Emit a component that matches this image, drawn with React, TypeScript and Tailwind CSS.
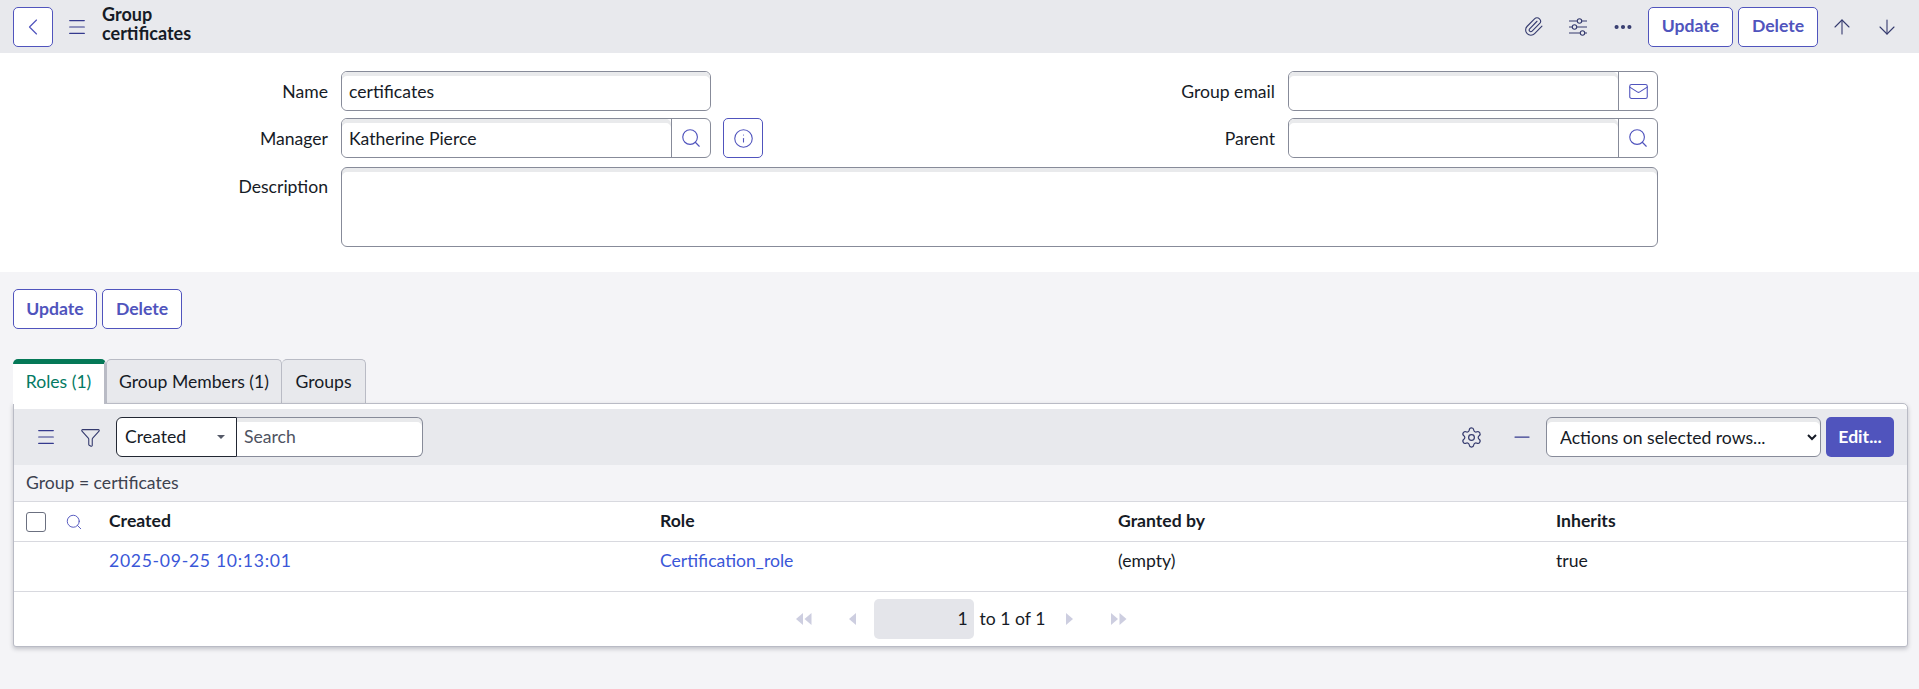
import { ArrowDown, ArrowUp, ChevronLeft, Ellipsis, Filter, Info, Mail, Menu, Minus, Paperclip, Search, Settings } from "lucide-react";
import type { ReactNode } from "react";

const inputClass =
  "h-full min-w-0 flex-1 rounded-[5px] bg-white px-[7px] text-[17.6px] text-[#161b26] shadow-[inset_0_4px_0_#e9eaec] outline-none";

function OutlineButton({ label, className }: { label: string; className: string }) {
  return (
    <button className={`h-10 rounded-[5px] border border-[#5054bd] bg-white text-[17.6px] font-bold text-[#5054bd] ${className}`}>
      {label}
    </button>
  );
}

function IconBox({ children }: { children: ReactNode }) {
  return (
    <span className="flex h-10 w-10 shrink-0 items-center justify-center rounded-[5px] border border-[#5054bd] bg-white text-[#5054bd]">
      {children}
    </span>
  );
}

function FieldLabel({ text, className }: { text: string; className: string }) {
  return <label className={`pr-[13px] text-right text-[17.6px] text-[#161b26] ${className}`}>{text}</label>;
}

function Field({ value, icon }: { value?: string; icon?: ReactNode }) {
  return (
    <div className="flex h-10 w-[370px] overflow-hidden rounded-[6px] border border-[#878b99] bg-white">
      <input readOnly value={value ?? ""} className={inputClass} />
      {icon && (
        <span className="flex w-[39px] shrink-0 items-center justify-center border-l border-[#878b99] text-[#5054bd]">
          {icon}
        </span>
      )}
    </div>
  );
}

function SlidersIcon() {
  return (
    <svg width="20" height="18" viewBox="0 0 20 18" fill="none" stroke="currentColor" strokeWidth="1.1">
      <path d="M1 3h8M14 3h5M1 9h3M9 9h10M1 15h11M17 15h2" />
      <circle cx="11.5" cy="3" r="2.2" />
      <circle cx="6.5" cy="9" r="2.2" />
      <circle cx="14.5" cy="15" r="2.2" />
    </svg>
  );
}

function PagerArrows({ dir, double }: { dir: "left" | "right"; double?: boolean }) {
  const tri = dir === "left" ? "M7 0v12L0 6z" : "M0 0v12l7-6z";
  return (
    <svg width={double ? 16 : 8} height="12" viewBox={double ? "0 0 16 12" : "0 0 8 12"} fill="#cdcee0">
      <path d={tri} />
      {double && <path d={tri} transform="translate(8.5 0)" />}
    </svg>
  );
}

export default function App() {
  return (
    <div className="flex h-[689px] flex-col overflow-hidden bg-[#f4f4f7] font-['Lato',sans-serif] text-[17.6px] text-[#161b26] [font-variant-numeric:tabular-nums]">
      <header className="flex h-[53px] shrink-0 items-center bg-[#e8e9ed] pl-[13px] pr-[20px]">
        <IconBox>
          <ChevronLeft size={28} strokeWidth={1} />
        </IconBox>
        <Menu size={22} strokeWidth={1.25} className="ml-[13px] text-[#343a8e]" />
        <h1 className="ml-[14px] pb-[5px] text-[18px] font-bold leading-[19px]">
          Group
          <br />
          certificates
        </h1>
        <div className="ml-auto flex items-center text-[#343a6e]">
          <Paperclip size={21} strokeWidth={1.25} />
          <span className="ml-[24px]">
            <SlidersIcon />
          </span>
          <Ellipsis size={22} strokeWidth={2.5} className="ml-[24px] mr-[14px]" />
          <div className="flex gap-[5px]">
            <OutlineButton label="Update" className="w-[85px]" />
            <OutlineButton label="Delete" className="w-[80px]" />
          </div>
          <ArrowUp size={24} strokeWidth={1.1} className="ml-[12px]" />
          <ArrowDown size={24} strokeWidth={1.1} className="ml-[21px]" />
        </div>
      </header>

      <section className="flex h-[219px] shrink-0 flex-col gap-[7px] bg-white pt-[18px]">
        <div className="flex h-10 items-center">
          <FieldLabel text="Name" className="w-[341px] pt-[2px]" />
          <Field value="certificates" />
          <FieldLabel text="Group email" className="w-[577px] pt-[2px]" />
          <Field icon={<Mail size={21} strokeWidth={1.25} />} />
        </div>
        <div className="flex h-10 items-center">
          <FieldLabel text="Manager" className="w-[341px] pt-[2px]" />
          <Field value="Katherine Pierce" icon={<Search size={22} strokeWidth={1.25} />} />
          <div className="ml-[12px]">
            <IconBox>
              <Info size={21} strokeWidth={1.25} />
            </IconBox>
          </div>
          <FieldLabel text="Parent" className="w-[525px] pt-[2px]" />
          <Field icon={<Search size={22} strokeWidth={1.25} />} />
        </div>
        <div className="mt-[2px] flex items-start">
          <FieldLabel text="Description" className="w-[341px] pt-[7px]" />
          <textarea
            readOnly
            className="h-20 w-[1317px] resize-none rounded-[6px] border border-[#878b99] bg-white shadow-[inset_0_4px_0_#e9eaec] outline-none"
          />
        </div>
      </section>

      <div className="mt-[17px] flex gap-[5px] pl-[13px]">
        <OutlineButton label="Update" className="w-[84px]" />
        <OutlineButton label="Delete" className="w-[80px]" />
      </div>

      <nav className="mt-[30px] flex h-[44px] pl-[13px]">
        <span className="z-10 -mb-px flex w-[93px] items-center justify-center rounded-t-[5px] border-r-2 border-t-[5px] border-r-[#b9bbc5] border-t-[#047857] bg-white pb-[3px] text-[#047a63]">
          Roles (1)
        </span>
        <span className="flex w-[176px] items-center justify-center rounded-t-[5px] border-x border-t border-[#b9bbc5] bg-[#e8e9ed] pt-[1px]">
          Group Members (1)
        </span>
        <span className="flex w-[84px] items-center justify-center rounded-t-[5px] border-r border-t border-[#b9bbc5] bg-[#e8e9ed] pt-[1px]">
          Groups
        </span>
      </nav>

      <section className="mr-[11px] ml-[13px] rounded-b-[3px] rounded-tr-[5px] border border-[#b9bbc5] bg-white pt-[5px] shadow-[0_2px_4px_rgba(40,44,60,0.25)]">
        <div className="flex h-[56px] items-center bg-[#e8e9ed] pl-[21px] pr-[13px]">
          <Menu size={22} strokeWidth={1.25} className="text-[#343a8e]" />
          <Filter size={21} strokeWidth={1.25} className="ml-[23px] text-[#343a6e]" />
          <div className="ml-[15px] flex h-10">
            <div className="flex w-[121px] items-center justify-between rounded-l-[6px] border border-[#222733] bg-white pl-[8px] pr-[11px]">
              Created
              <span className="h-0 w-0 border-x-[4px] border-t-[4px] border-x-transparent border-t-[#555a68]" />
            </div>
            <input
              readOnly
              placeholder="Search"
              className="w-[186px] rounded-r-[6px] border border-l-0 border-[#878b99] bg-white px-[7px] text-[17.6px] shadow-[inset_0_4px_0_#e9eaec] outline-none placeholder:text-[#4e5361]"
            />
          </div>
          <Settings size={23} strokeWidth={1.25} className="ml-auto text-[#343a6e]" />
          <Minus size={24} strokeWidth={1.25} className="ml-[27px] text-[#343a8e]" />
          <select className="ml-[12px] h-10 w-[275px] rounded-[6px] border border-[#878b99] bg-white pl-[9px] text-[17.6px] shadow-[inset_0_4px_0_#e9eaec]">
            <option>Actions on selected rows...</option>
          </select>
          <button className="ml-[5px] h-10 w-[68px] rounded-[5px] bg-[#5054bd] text-[17.6px] font-bold text-white">
            Edit...
          </button>
        </div>

        <div className="flex h-[37px] items-center border-b border-[#d8d9df] bg-[#f4f4f7] pl-[12px] text-[#3d4250]">
          Group = certificates
        </div>

        <div className="grid h-[40px] grid-cols-[95px_551px_458px_438px_1fr] items-center border-b border-[#d8d9df] font-bold">
          <div className="flex items-center pl-[12px]">
            <span className="h-5 w-5 rounded-[3px] border border-[#6b7080] bg-white" />
            <Search size={18} strokeWidth={1.25} className="ml-[19px] text-[#5054bd]" />
          </div>
          <div>Created</div>
          <div>Role</div>
          <div>Granted by</div>
          <div>Inherits</div>
        </div>

        <div className="grid h-[50px] grid-cols-[95px_551px_458px_438px_1fr] border-b border-[#d8d9df] pt-[6px]">
          <div />
          <a className="tracking-[0.7px] text-[#3a57d8]">2025-09-25 10:13:01</a>
          <a className="text-[#3a57d8]">Certification_role</a>
          <div>(empty)</div>
          <div>true</div>
        </div>

        <footer className="flex h-[54px] items-center justify-center pl-[2px]">
          <PagerArrows dir="left" double />
          <span className="ml-[37px]">
            <PagerArrows dir="left" />
          </span>
          <span className="ml-[17px] flex h-10 w-[100px] items-center justify-end rounded-[5px] bg-[#e4e5ea] pr-[6px]">
            1
          </span>
          <span className="ml-[6px]">to 1 of 1</span>
          <span className="ml-[21px]">
            <PagerArrows dir="right" />
          </span>
          <span className="ml-[37px]">
            <PagerArrows dir="right" double />
          </span>
        </footer>
      </section>
    </div>
  );
}
